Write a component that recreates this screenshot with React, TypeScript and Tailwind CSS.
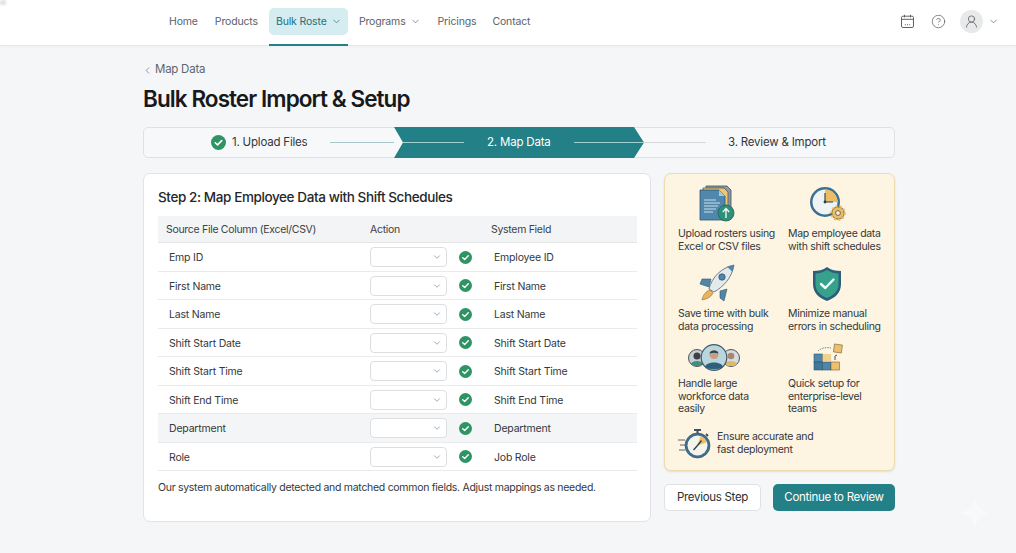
import React from "react";
import { ChevronDown, ChevronLeft, CircleHelp, UserRound } from "lucide-react";

const rows = [
  ["Emp ID", "Employee ID"],
  ["First Name", "First Name"],
  ["Last Name", "Last Name"],
  ["Shift Start Date", "Shift Start Date"],
  ["Shift Start Time", "Shift Start Time"],
  ["Shift End Time", "Shift End Time"],
  ["Department", "Department"],
  ["Role", "Job Role"],
];

function CheckDot({ size = 13 }: { size?: number }) {
  return (
    <svg width={size} height={size} viewBox="0 0 14 14" className="shrink-0">
      <circle cx="7" cy="7" r="7" fill="#2f9463" />
      <path d="M4 7.2l2.1 2L10 5.2" fill="none" stroke="#fff" strokeWidth="1.5" strokeLinecap="round" strokeLinejoin="round" />
    </svg>
  );
}

function CalendarIcon() {
  return (
    <svg width="15" height="15" viewBox="0 0 15 15" fill="none" stroke="#5d6367" strokeWidth="1">
      <rect x="1.5" y="2.2" width="12" height="11.3" rx="1.4" />
      <path d="M1.5 5.3h12M4.5 .8v2.6M10.5 .8v2.6" />
      <path d="M4.8 10.8h1M7 10.8h1M9.2 10.8h1" strokeWidth="1.1" />
    </svg>
  );
}

function DocsIcon() {
  return (
    <svg width="36" height="38" viewBox="0 0 36 38">
      <path d="M7 2h21l4 4v24H7z" fill="#8f99a3" stroke="#3d4f5c" strokeWidth=".8" />
      <path d="M4 4h21l4 4v24H4z" fill="#eec66f" stroke="#4b5a5f" strokeWidth=".8" />
      <path d="M1 6h19l6 6v24H1z" fill="#4f87ad" stroke="#2f5570" strokeWidth=".8" />
      <path d="M20 6v6h6z" fill="#a9c6da" />
      <path d="M5 16h12M5 19h16M5 22h14M5 25h12M5 28h9" stroke="#cfe0ea" strokeWidth="1" />
      <circle cx="27" cy="29" r="8" fill="#2f9079" stroke="#205f58" strokeWidth=".8" />
      <path d="M27 34v-9M23.8 28l3.2-3.4 3.2 3.4" fill="none" stroke="#eaf6f2" strokeWidth="1.4" />
    </svg>
  );
}

function ClockIcon() {
  return (
    <svg width="37" height="36" viewBox="0 0 37 36">
      <circle cx="16" cy="16" r="15" fill="#3f6f8f" />
      <circle cx="16" cy="16" r="12.5" fill="#eef3f4" />
      <path d="M16 16V3.500A12.5 12.5 0 0 1 28.5 16z" fill="#ecbd65" />
      <path d="M16 7v9h8" fill="none" stroke="#2d3d48" strokeWidth="1.1" />
      <circle cx="16" cy="16" r="1.4" fill="#2d3d48" />
      <circle cx="29" cy="27" r="6.2" fill="#ecbd65" stroke="#5a5a45" strokeWidth=".9" />
      <circle cx="29" cy="27" r="6.8" fill="none" stroke="#ecbd65" strokeWidth="2" strokeDasharray="2 2.2" />
      <circle cx="29" cy="27" r="2.4" fill="#fdf5e0" stroke="#5a5a45" strokeWidth=".9" />
    </svg>
  );
}

function RocketIcon() {
  return (
    <svg width="36" height="38" viewBox="0 0 36 38">
      <path d="M12 15L3 15l-2 5 9 3zM21 27v7l4 3 3-12z" fill="#4f87a8" stroke="#37566a" strokeWidth=".6" />
      <path d="M10 25C13 13 22 4 35 1c-2 13-11 22-20 27z" fill="#e3eaed" stroke="#4d6575" strokeWidth=".8" />
      <path d="M28 2.500L35 1l-1.500 7z" fill="#4f87a8" />
      <circle cx="23" cy="13" r="3.2" fill="#4f87a8" stroke="#37566a" strokeWidth=".8" />
      <path d="M11 26c-4 1-7 5-8 10 5-1 9-3 11-7z" fill="#e9b35c" stroke="#8f6a32" strokeWidth=".6" />
    </svg>
  );
}

function ShieldIcon() {
  return (
    <svg width="30" height="36" viewBox="0 0 30 36">
      <path d="M15 1c4 3 9 4 14 4v13c0 9-6 14-14 17C7 32 1 27 1 18V5c5 0 10-1 14-4z" fill="#2d5f78" />
      <path d="M15 4c4 2.500 8 3.500 11.500 3.500V18c0 7-5 11.500-11.500 14C8.500 29.500 3.500 25 3.500 18V7.500C7 7.500 11 6.500 15 4z" fill="#37a28c" />
      <path d="M9 18l4.300 4L21.500 13.500" fill="none" stroke="#f0faf6" strokeWidth="2.4" strokeLinecap="round" strokeLinejoin="round" />
    </svg>
  );
}

function PeopleIcon() {
  return (
    <svg width="52" height="27" viewBox="0 0 52 27">
      <circle cx="9" cy="14" r="8.5" fill="#c5ced2" stroke="#49565e" strokeWidth="1" />
      <circle cx="9" cy="12" r="3.5" fill="#3c3f44" />
      <path d="M3 20c1-4 11-4 12 0l-3 2H6z" fill="#3f8f7a" />
      <circle cx="43" cy="14" r="8.5" fill="#d6dcdf" stroke="#49565e" strokeWidth="1" />
      <circle cx="43" cy="12" r="3.3" fill="#a9866b" />
      <path d="M37 20c1-4 11-4 12 0l-3 2h-6z" fill="#e0b865" />
      <circle cx="26" cy="13.500" r="12.8" fill="#b9d6de" stroke="#3e5a68" strokeWidth="1.2" />
      <circle cx="26" cy="10.500" r="4.5" fill="#c99d7d" />
      <path d="M21.500 9.500c.5-4 8.500-4 9 0-3-1-6-1-9 0z" fill="#254554" />
      <path d="M17 23c1-6 17-6 18 0-4 3-14 3-18 0z" fill="#2f5f7b" />
    </svg>
  );
}

function BlocksIcon() {
  return (
    <svg width="30" height="28" viewBox="0 0 30 28">
      <rect x="1" y="11" width="8.5" height="8" fill="#4f87a8" stroke="#2f5570" strokeWidth=".6" />
      <rect x="1" y="19" width="8.5" height="8" fill="#3f7898" stroke="#2f5570" strokeWidth=".6" />
      <rect x="9.5" y="19" width="8.5" height="8" fill="#4f87a8" stroke="#2f5570" strokeWidth=".6" />
      <rect x="18" y="19" width="8.5" height="8" fill="#ecc06c" stroke="#7a6335" strokeWidth=".6" />
      <rect x="9.5" y="11" width="8.5" height="8" fill="#ecc06c" opacity=".7" />
      <rect x="21" y="1.500" width="8" height="8" fill="#ecc06c" stroke="#7a6335" strokeWidth=".6" transform="rotate(8 25 5)" />
      <path d="M5 8C8 5 13 4 18 5" fill="none" stroke="#47565e" strokeWidth=".7" strokeDasharray="1.5 1" />
      <path d="M22 17v-4l2-1" fill="none" stroke="#47565e" strokeWidth="1" />
    </svg>
  );
}

function WatchIcon() {
  return (
    <svg width="33" height="30" viewBox="0 0 33 30">
      <path d="M0 11h7M2 16h5M1 21h6" stroke="#47565e" strokeWidth=".9" />
      <path d="M16 1h7M19.500 1v4M28 5l2 2" stroke="#40525e" strokeWidth="2" />
      <circle cx="19.500" cy="16.500" r="12.5" fill="#3f6f8f" stroke="#2f4a5c" strokeWidth=".6" />
      <circle cx="19.500" cy="16.500" r="10" fill="#f5f4ea" />
      <path d="M19.500 16.500l3-9.500a10 10 0 0 1 6 6.500z" fill="#ecbd65" />
      <path d="M15.500 21l4-4.500 4-5" stroke="#2d3d48" strokeWidth="1.3" />
    </svg>
  );
}

function Benefit({ icon, lines, shift, gap = "mt-[6px]" }: { icon: React.ReactNode; lines: string[]; shift: string; gap?: string }) {
  return (
    <div>
      <div className={`flex h-[37px] items-end ${shift}`}>{icon}</div>
      <p className={`${gap} text-[10.5px] leading-[12.7px] tracking-[-0.3px] text-[#33383c]`}>
        {lines.map((l) => (
          <span key={l} className="block whitespace-nowrap">{l}</span>
        ))}
      </p>
    </div>
  );
}

export default function App() {
  return (
    <div className="relative h-[553px] w-[1016px] overflow-hidden bg-[#f5f6f8] font-['Inter',sans-serif]">
      <div className="absolute left-0 top-0 h-[5px] w-[6px] bg-gray-300/70 blur-[1px]" />
      <header className="flex h-[46px] items-start justify-between border-b border-[#e6e7e9] bg-white pl-[169px] pr-[17px] shadow-[0_1px_2px_rgba(0,0,0,0.03)]">
        <nav className="flex items-start text-[10.5px] tracking-[-0.15px] text-[#5a6268]">
          <a className="mt-2 flex h-[27px] items-center">Home</a>
          <a className="ml-[17px] mt-2 flex h-[27px] items-center">Products</a>
          <div className="ml-[11px] flex h-[46px] w-[79px] flex-col border-b-[2px] border-[#238086]">
            <a className="mt-2 flex h-[27px] items-center gap-[4px] rounded-[5px] bg-[#d5edf0] pl-[7px] text-[#23707a]">
              Bulk Roste <ChevronDown size={11} strokeWidth={1.5} />
            </a>
          </div>
          <a className="ml-[11px] mt-2 flex h-[27px] items-center gap-[4px]">
            Programs <ChevronDown size={11} strokeWidth={1.5} />
          </a>
          <a className="ml-[17px] mt-2 flex h-[27px] items-center">Pricings</a>
          <a className="ml-[16px] mt-2 flex h-[27px] items-center">Contact</a>
        </nav>
        <div className="mt-[10px] flex items-center text-[#5d6367]">
          <CalendarIcon />
          <CircleHelp size={15} strokeWidth={1.2} className="ml-4" />
          <div className="ml-[14.5px] flex h-[23px] w-[23px] items-center justify-center rounded-full bg-[#e8e9ea]">
            <UserRound size={15} strokeWidth={1.3} />
          </div>
          <ChevronDown size={11} strokeWidth={1.5} className="ml-[5px]" />
        </div>
      </header>

      <main className="ml-[143px] w-[752px]">
        <div className="mt-[17px] flex h-[14px] items-center gap-[2px] text-[11.5px] tracking-[-0.25px] text-[#5f666b]">
          <ChevronLeft size={11} strokeWidth={1.4} className="-ml-px" />
          Map Data
        </div>
        <h1 className="mt-[5px] h-[34px] text-[22.5px] font-semibold leading-[34px] tracking-[-0.92px] text-[#17191b]">
          Bulk Roster Import &amp; Setup
        </h1>

        <div className="mt-[11px] flex h-[31px] rounded-[5px] border border-[#dfe1e4] bg-[#f7f8f9] text-[11.5px] tracking-[-0.2px]">
          <div className="flex w-[250px] items-center pl-[67px]">
            <CheckDot size={15} />
            <span className="ml-[6px] text-[#32373b]">1. Upload Files</span>
            <span className="ml-[23px] h-px flex-1 bg-[#a9c6c9]" />
          </div>
          <div className="-my-px flex w-[250px] items-center bg-[#238086] text-white [clip-path:polygon(0_0,240px_0,100%_50%,240px_100%,0_100%,9px_50%)]">
            <span className="h-px w-[70px] bg-[#9fd0d2]" />
            <span className="ml-[23px]">2. Map Data</span>
            <span className="ml-[23px] h-px flex-1 bg-[#9fd0d2]" />
          </div>
          <div className="flex flex-1 items-center">
            <span className="h-px w-[62px] bg-[#d6d9db]" />
            <span className="ml-[22px] text-[#32373b]">3. Review &amp; Import</span>
          </div>
        </div>

        <div className="mt-[15px] flex items-start gap-[13px]">
          <section className="h-[349px] w-[508px] rounded-[7px] border border-[#e1e3e6] bg-white pl-[14px] pr-[13px]">
            <h2 className="mt-[14px] h-[18px] text-[13.5px] font-medium leading-[18px] tracking-[-0.4px] text-[#24282b]">
              Step 2: Map Employee Data with Shift Schedules
            </h2>
            <div className="mt-[10px] flex h-[27px] items-center border-b border-[#e3e5e7] bg-[#f3f4f5] pt-px text-[10.5px] tracking-[-0.3px] text-[#3c4246]">
              <span className="w-[212px] pl-[8px]">Source File Column (Excel/CSV)</span>
              <span className="w-[121px]">Action</span>
              <span>System Field</span>
            </div>
            {rows.map(([src, field]) => (
              <div
                key={src}
                className={`flex h-[28.5px] items-center border-b border-[#e9ebed] pt-px text-[10.5px] tracking-[-0.2px] text-[#33383c] ${
                  src === "Department" ? "bg-[#f4f5f6]" : ""
                }`}
              >
                <span className="w-[212px] pl-[11px] pt-[2px]">{src}</span>
                <div className="flex h-[20px] w-[77px] items-center justify-end rounded-[4px] border border-[#dcdfe2] bg-white pr-[4px] text-[#6f767b]">
                  <ChevronDown size={10} strokeWidth={1.5} />
                </div>
                <span className="ml-[12px] flex"><CheckDot /></span>
                <span className="ml-[22px] pt-[2px]">{field}</span>
              </div>
            ))}
            <p className="mt-[10px] text-[10.5px] leading-[14px] tracking-[-0.29px] text-[#33383c]">
              Our system automatically detected and matched common fields. Adjust mappings as needed.
            </p>
          </section>

          <aside className="w-[231px]">
            <div className="h-[298px] rounded-[7px] border border-[#ecdcae] bg-[#fdf5e1] pl-[13px] pt-[11px] shadow-[0_1px_2px_rgba(120,90,20,0.15)]">
              <div className="grid grid-cols-[110px_1fr] gap-y-[12px]">
                <Benefit icon={<DocsIcon />} shift="pl-[21px]" lines={["Upload rosters using", "Excel or CSV files"]} />
                <Benefit icon={<ClockIcon />} shift="pl-[21px]" lines={["Map employee data", "with shift schedules"]} />
                <Benefit icon={<RocketIcon />} shift="pl-[21px]" lines={["Save time with bulk", "data processing"]} />
                <Benefit icon={<ShieldIcon />} shift="pl-[24px]" lines={["Minimize manual", "errors in scheduling"]} />
                <div className="-mt-[12px]">
                  <Benefit icon={<PeopleIcon />} shift="pl-[10px]" gap="mt-[7px]" lines={["Handle large", "workforce data", "easily"]} />
                </div>
                <div className="-mt-[12px]">
                  <Benefit icon={<BlocksIcon />} shift="pl-[25px]" gap="mt-[7px]" lines={["Quick setup for", "enterprise-level", "teams"]} />
                </div>
              </div>
              <div className="mt-[13px] flex items-center gap-[6px]">
                <WatchIcon />
                <p className="text-[10.5px] leading-[12.7px] tracking-[-0.3px] text-[#33383c]">
                  Ensure accurate and
                  <br />
                  fast deployment
                </p>
              </div>
            </div>
            <div className="mt-[13px] flex justify-between text-[11.5px] tracking-[-0.3px]">
              <button className="h-[27px] w-[97px] rounded-[5px] border border-[#dfe1e4] bg-white text-[#2b2f33]">Previous Step</button>
              <button className="h-[27px] w-[122px] rounded-[5px] bg-[#238086] text-white">Continue to Review</button>
            </div>
          </aside>
        </div>
      </main>

      <svg width="36" height="36" viewBox="0 0 36 36" className="absolute left-[957px] top-[495px]">
        <path d="M18 1c1 10 6 16 17 17-11 1-16 7-17 17-1-10-6-16-17-17 11-1 16-7 17-17z" fill="#fff" opacity=".4" />
      </svg>
    </div>
  );
}
